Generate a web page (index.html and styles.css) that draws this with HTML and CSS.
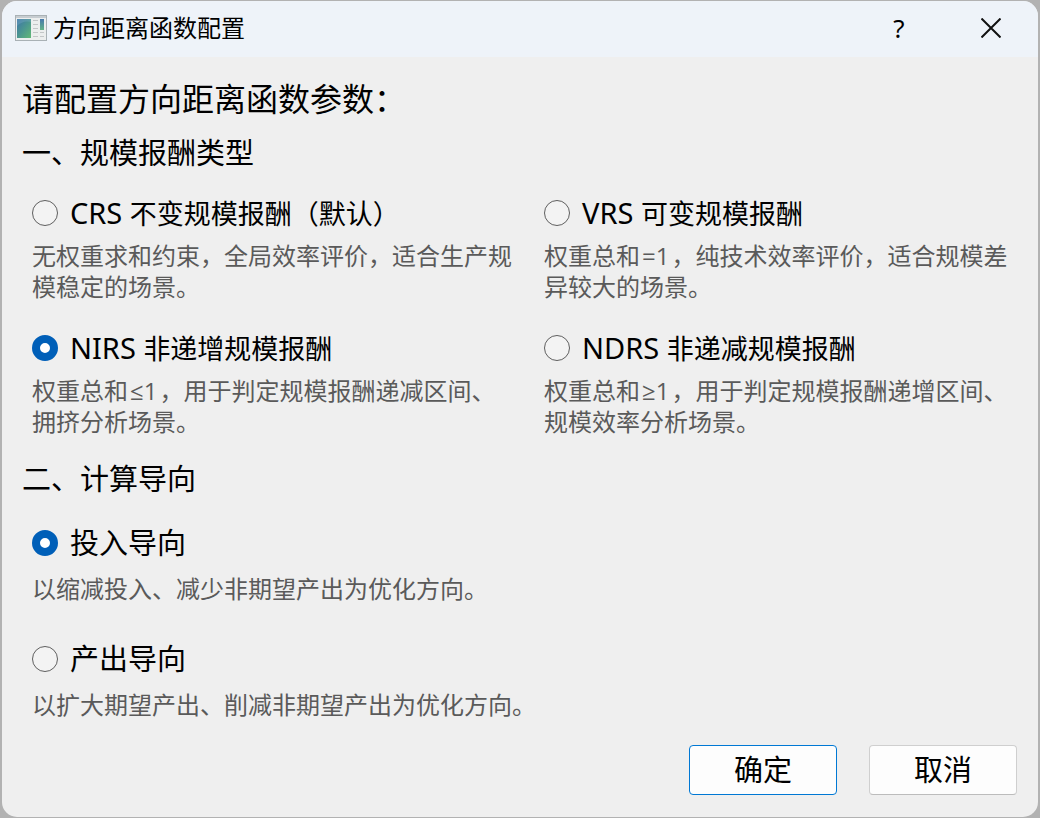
FILE: index.html
```html
<!DOCTYPE html>
<html lang="zh-CN">
<head>
<meta charset="utf-8">
<title>方向距离函数配置</title>
<link rel="stylesheet" href="styles.css">
</head>
<body>
<form class="dialog">
  <header class="titlebar">
    <svg class="app-icon" viewBox="0 0 32 26" aria-hidden="true">
      <defs>
        <linearGradient id="pane" x1="0" y1="0" x2="1" y2="1">
          <stop offset="0" stop-color="#3d74a8"/>
          <stop offset="0.5" stop-color="#4b9690"/>
          <stop offset="1" stop-color="#62b876"/>
        </linearGradient>
        <linearGradient id="side" x1="0" y1="0" x2="0" y2="1">
          <stop offset="0" stop-color="#4778ad"/>
          <stop offset="1" stop-color="#62b487"/>
        </linearGradient>
      </defs>
      <rect x="0.5" y="0.5" width="31" height="25" fill="#eceeee" stroke="#a9b1b5"/>
      <path d="M1 2h30" stroke="#c6ccd0" stroke-width="2"/>
      <rect x="2" y="4" width="14" height="19" fill="url(#pane)"/>
      <path d="M2 11Q8 5 16 7V4H2z" fill="#7eb0c8" opacity="0.35"/>
      <path d="M18 5.500h5M18 9.500h5M18 13.500h5M18 17.500h5M18 21.500h5M25 17.500h4M25 21.500h4" stroke="#c3c6c7"/>
      <rect x="25" y="4" width="4" height="11" fill="url(#side)"/>
    </svg>
    <h1 class="title">方向距离函数配置</h1>
    <button class="caption-button help" type="button" aria-label="帮助">?</button>
    <button class="caption-button" type="button" aria-label="关闭">
      <svg class="close-icon" viewBox="0 0 20 20" aria-hidden="true"><path d="M0.500 0.500l19 19M19.500 0.500l-19 19"/></svg>
    </button>
  </header>
  <main class="content">
    <h2 class="heading">请配置方向距离函数参数：</h2>

    <h3 class="section-title">一、规模报酬类型</h3>
    <div class="options scale">
      <div class="option">
        <label class="choice mixed"><input class="radio" type="radio" name="scale"><span><span class="latin">CRS </span>不变规模报酬（默认）</span></label>
        <p class="description">无权重求和约束，全局效率评价，适合生产规模稳定的场景。</p>
      </div>
      <div class="option">
        <label class="choice mixed"><input class="radio" type="radio" name="scale"><span><span class="latin">VRS </span>可变规模报酬</span></label>
        <p class="description">权重总和<span class="math">=1</span>，纯技术效率评价，适合规模差异较大的场景。</p>
      </div>
      <div class="option">
        <label class="choice mixed"><input class="radio" type="radio" name="scale" checked><span><span class="latin">NIRS </span>非递增规模报酬</span></label>
        <p class="description">权重总和<span class="math">≤1</span>，用于判定规模报酬递减区间、拥挤分析场景。</p>
      </div>
      <div class="option">
        <label class="choice mixed"><input class="radio" type="radio" name="scale"><span><span class="latin">NDRS </span>非递减规模报酬</span></label>
        <p class="description">权重总和<span class="math">≥1</span>，用于判定规模报酬递增区间、规模效率分析场景。</p>
      </div>
    </div>

    <h3 class="section-title">二、计算导向</h3>
    <div class="options orientation">
      <div class="option">
        <label class="choice"><input class="radio" type="radio" name="orientation" checked><span>投入导向</span></label>
        <p class="description">以缩减投入、减少非期望产出为优化方向。</p>
      </div>
      <div class="option">
        <label class="choice"><input class="radio" type="radio" name="orientation"><span>产出导向</span></label>
        <p class="description">以扩大期望产出、削减非期望产出为优化方向。</p>
      </div>
    </div>

    <footer class="actions">
      <button class="button primary" type="submit">确定</button>
      <button class="button" type="button">取消</button>
    </footer>
  </main>
</form>
</body>
</html>
```
FILE: styles.css
```css
* {
  box-sizing: border-box;
}

body {
  margin: 0;
  min-height: 100vh;
  padding: 1px 2px 2px;
  display: flex;
  background: #b2b2b2;
  color: #000;
  font-family: "Noto Sans", "Noto Sans CJK SC", sans-serif;
}

h1, h2, h3, p {
  margin: 0;
  font-weight: 400;
}

button, input {
  margin: 0;
  font: inherit;
  color: inherit;
}

.dialog {
  flex: 1;
  display: flex;
  flex-direction: column;
  overflow: hidden;
  border-radius: 15px;
  background: #efefef;
}

.titlebar {
  display: flex;
  align-items: center;
  height: 56px;
  padding: 0 1px 2px 13px;
  background: #eef3f9;
}

.app-icon {
  width: 32px;
  height: 26px;
}

.title {
  flex: 1;
  padding-left: 6px;
  font-size: 24px;
  line-height: 32px;
}

.caption-button {
  display: flex;
  align-items: center;
  justify-content: center;
  width: 92px;
  height: 54px;
  padding: 0;
  border: 0;
  background: none;
}

.help {
  font-size: 26px;
}

.close-icon {
  width: 20px;
  height: 20px;
  fill: none;
  stroke: #111;
  stroke-width: 2;
}

.content {
  flex: 1;
  display: flex;
  flex-direction: column;
  padding: 22px 21px 22px 20px;
}

.heading {
  font-size: 32px;
  line-height: 40px;
}

.section-title {
  margin-top: 15px;
  font-size: 29px;
  line-height: 38px;
}

.options {
  display: grid;
  padding-left: 10px;
}

.scale {
  grid-template-columns: 1fr 1fr;
  gap: 28px 32px;
  margin: 23px -7px 8px 0;
}

.orientation {
  gap: 37px;
  margin-top: 27px;
}

.choice {
  display: flex;
  align-items: center;
  gap: 12px;
  height: 36px;
  font-size: 29px;
  line-height: 36px;
}

.mixed {
  font-size: 27px;
}

.latin {
  font-size: 29px;
  white-space: pre;
}

.radio {
  appearance: none;
  flex: none;
  width: 26px;
  height: 26px;
  border: 1px solid #5f5f5f;
  border-radius: 50%;
  background: #f3f3f3;
}

.radio:checked {
  border: 8px solid #005fb8;
  background: #fff;
}

.description {
  margin-top: 9px;
  color: #5a5a5a;
  font-size: 24px;
  line-height: 31px;
}

.math {
  margin: 0 2px;
  font-family: "Open Sans", sans-serif;
}

.orientation .description {
  margin-top: 12px;
}

.actions {
  display: flex;
  justify-content: flex-end;
  gap: 32px;
  margin-top: 25px;
}

.button {
  width: 148px;
  height: 50px;
  padding: 0;
  border: 1px solid #cfcfcf;
  border-bottom-color: #bcbcbc;
  border-radius: 4px;
  background: #fdfdfd;
  font-size: 29px;
  line-height: 38px;
}

.primary {
  border-color: #0078d4;
}
```
